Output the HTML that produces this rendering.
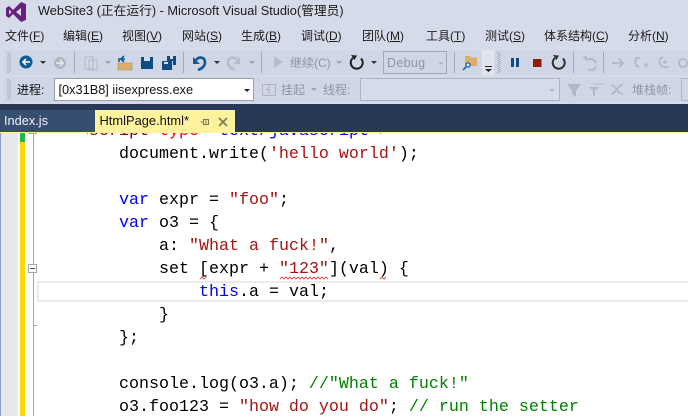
<!DOCTYPE html>
<html><head><meta charset="utf-8">
<style>
html,body{margin:0;padding:0}
body{width:688px;height:416px;overflow:hidden;position:relative;background:#d6dbe9;font-family:"Liberation Sans","Noto Sans CJK SC",sans-serif;font-size:12px;color:#111}
.a{position:absolute;white-space:pre}
.m{top:28px;line-height:16px;font-size:12px;color:#1b1b1b}
.m u{text-decoration:underline}
.g{color:#8f96a3}
.c{position:absolute;font-family:"Liberation Mono",monospace;font-size:16.67px;line-height:23px;white-space:pre;color:#000;height:23px}
.k{color:#0000ff}.s{color:#a31515}.t{color:#008000}.r{color:#ff0000}
svg{position:absolute;left:0;top:0}
</style></head><body>
<svg width="688" height="104" viewBox="0 0 688 104">
<!-- logo -->
<path d="M6 8 L9 6 L13 10 L21 2 L26 4 V20 L21 22 L13 14 L9 18 L6 16Z M9 9.500 V14.500 L11.500 12Z M16 12 L21 16 V8Z" fill="#68217a" fill-rule="evenodd"/>
<!-- toolbar bgs -->
<rect x="4" y="50" width="684" height="25" fill="#cfd6e5"/>
<rect x="4" y="77" width="684" height="25" fill="#cfd6e5"/>
<g stroke="#8a90a0" stroke-dasharray="1 1" fill="none"><path d="M8 52V73M10 53V73M8 79V100M10 80V100M498 52V73M500 53V73"/></g>
<rect x="482" y="50" width="12" height="25" fill="#dfe4ef"/>
<!-- nav -->
<circle cx="26" cy="62" r="6.500" fill="#0e5a96"/><path d="M30 62H23M26 59L23 62L26 65" stroke="#fff" stroke-width="1.600" fill="none"/>
<path d="M40 61h6l-3 3z" fill="#333"/>
<circle cx="60" cy="63" r="6" fill="#b4b8c2"/><path d="M56 63H63M60 60L63 63L60 66" stroke="#e8eaf0" stroke-width="1.500" fill="none"/>
<rect x="74" y="52" width="1" height="21" fill="#a3a9b8"/>
<path d="M85 57h8v12h-8z M89 60h8v10h-8z" fill="none" stroke="#b4b8c2"/><path d="M105 61h6l-3 3z" fill="#a0a4ae"/>
<path d="M118 63h14v7h-14z" fill="#dcae6b" stroke="#b58d50" stroke-width=".6"/><path d="M119 62v-3h6M124 56l-3 3 3 3" stroke="#0e5a96" stroke-width="1.600" fill="none"/>
<path d="M141 57h12v12h-12z" fill="#0e4c86"/><path d="M144 57h6v4h-6z" fill="#d6dbe9"/>
<path d="M162 61h10v9h-10z M167 56h9v9h-3v-4h-6z" fill="#0e4c86"/><path d="M170 56h3v3h-3z M164 62h4v2h-4z" fill="#d6dbe9"/>
<rect x="183" y="52" width="1" height="21" fill="#a3a9b8"/>
<path d="M196 60 C199 56 205 57 205 62.500 C205 66.500 201 69 198 70" stroke="#0e5a96" stroke-width="2.600" fill="none"/><path d="M193 57V64H200Z" fill="#0e5a96"/>
<path d="M214 61h6l-3 3z" fill="#333"/>
<path d="M237 60 C234 56 228 57 228 62.500 C228 66.500 232 69 235 70" stroke="#b9bdc7" stroke-width="2.600" fill="none"/><path d="M240 57V64H233Z" fill="#b9bdc7"/>
<path d="M249 61h6l-3 3z" fill="#a0a4ae"/>
<rect x="261" y="52" width="1" height="21" fill="#a3a9b8"/>
<path d="M274 56 L283 62 L274 68Z" fill="#b9bdc7"/>
<path d="M336 61h6l-3 3z" fill="#a0a4ae"/>
<path d="M361 58.500A6 6 0 1 1 353 58" fill="none" stroke="#222" stroke-width="2"/><path d="M351 55l6 .5-2.500 4.500z" fill="#222"/>
<path d="M371 61h6l-3 3z" fill="#333"/>
<rect x="383.500" y="51.500" width="63" height="22" fill="none" stroke="#a3a9b8"/>
<path d="M438 62h6l-3 3z" fill="#b4b8c2"/>
<rect x="454" y="52" width="1" height="21" fill="#a3a9b8"/>
<path d="M465 56h5l1 1.500h6v8.500h-12z" fill="#dcae6b"/><circle cx="468" cy="65" r="2.200" fill="#d6dbe9" stroke="#0e5a96" stroke-width="1.200"/><path d="M466 67l-3 3" stroke="#0e5a96" stroke-width="1.500"/>
<path d="M485 66h7v1h-7zM485 69h7l-3.500 3z" fill="#222"/>
<rect x="511" y="58" width="3" height="9" fill="#0e4c86"/><rect x="516" y="58" width="3" height="9" fill="#0e4c86"/>
<rect x="533" y="59" width="8.500" height="8" fill="#8f1d0c"/>
<path d="M563 58.500A6 6 0 1 1 555 58" fill="none" stroke="#333" stroke-width="2"/><path d="M553 55l6 .5-2.500 4.500z" fill="#333"/>
<rect x="573" y="52" width="1" height="21" fill="#a3a9b8"/>
<g fill="none" stroke="#b4b8c2" stroke-width="2"><path d="M587 60a6 6 0 0 1 9 3M596 66a5 5 0 0 1-8 3"/></g><path d="M582 57l5-1v5z" fill="#b4b8c2"/>
<rect x="603" y="52" width="1" height="21" fill="#a3a9b8"/>
<path d="M612 63h11M619 59l4 4-4 4" fill="none" stroke="#b4b8c2" stroke-width="1.800"/>
<path d="M639 58c-5 1-5 7 0 9M635 58h5" fill="none" stroke="#b4b8c2" stroke-width="1.800"/><circle cx="646" cy="65" r="1.800" fill="#b4b8c2"/>
<path d="M663 57c-5 2-5 8 1 10h5" fill="none" stroke="#b4b8c2" stroke-width="1.800"/><circle cx="665" cy="62" r="1.800" fill="#b4b8c2"/>
<circle cx="683" cy="63" r="4" fill="none" stroke="#b4b8c2" stroke-width="1.800"/>
<!-- toolbar 2 -->
<rect x="54.500" y="78.500" width="199" height="22" fill="#fff" stroke="#9ba0ad"/>
<path d="M244 89h6l-3 3z" fill="#222"/>
<rect x="262.500" y="84.500" width="13" height="11" fill="none" stroke="#b0b4be"/><path d="M270 86l-3 4h3l-2 4" stroke="#b0b4be" fill="none"/>
<path d="M311 88h6l-3 3z" fill="#a0a4ae"/>
<rect x="360.500" y="78.500" width="199" height="22" fill="#d6dbe9" stroke="#b0b4be"/>
<path d="M549 89h6l-3 3z" fill="#b4b8c2"/>
<path d="M567 84h14l-5 7v6l-4-3v-3z" fill="#b4b8c2"/>
<path d="M589 87h10l-4 4v5h-2v-5z" fill="#b4b8c2"/><path d="M593 84h10" stroke="#b4b8c2"/>
<path d="M611 85c5 0 6 9 12 9M611 94c5 0 6-9 12-9" fill="none" stroke="#b4b8c2" stroke-width="1.800"/>
<rect x="681.500" y="78.500" width="12" height="22" fill="none" stroke="#b0b4be"/>
</svg>

<div class="a" style="left:38px;top:3px;line-height:16px;font-size:12.750px;color:#1b1b1b">WebSite3 (正在运行) - Microsoft Visual Studio(管理员)</div>

<div class="a m" style="left:5px">文件(<u>F</u>)</div>
<div class="a m" style="left:63px">编辑(<u>E</u>)</div>
<div class="a m" style="left:122px">视图(<u>V</u>)</div>
<div class="a m" style="left:182px">网站(<u>S</u>)</div>
<div class="a m" style="left:241px">生成(<u>B</u>)</div>
<div class="a m" style="left:301px">调试(<u>D</u>)</div>
<div class="a m" style="left:362px">团队(<u>M</u>)</div>
<div class="a m" style="left:426px">工具(<u>T</u>)</div>
<div class="a m" style="left:485px">测试(<u>S</u>)</div>
<div class="a m" style="left:544px">体系结构(<u>C</u>)</div>
<div class="a m" style="left:628px">分析(<u>N</u>)</div>

<div class="a g" style="left:290px;top:55px;line-height:16px">继续(C)</div>
<div class="a g" style="left:387px;top:55px;line-height:16px;font-size:12.500px;letter-spacing:.3px">Debug</div>
<div class="a" style="left:17px;top:82px;line-height:16px">进程:</div>
<div class="a" style="left:58.500px;top:82px;line-height:16px;font-size:12.750px">[0x31B8] iisexpress.exe</div>
<div class="a g" style="left:281px;top:82px;line-height:16px">挂起</div>
<div class="a g" style="left:323px;top:82px;line-height:16px">线程:</div>
<div class="a g" style="left:632px;top:82px;line-height:16px">堆栈帧:</div>

<!-- tab strip -->
<div class="a" style="left:0;top:104px;width:688px;height:28px;background:#293955"></div>
<div class="a" style="left:0;top:110px;width:95px;height:22px;background:#364e6f"></div>
<div class="a" style="left:95px;top:110px;width:140px;height:22px;background:#fff29d"></div>
<div class="a" style="left:0;top:132px;width:688px;height:1px;background:#fff29d"></div>
<div class="a" style="left:4px;top:113px;line-height:16px;font-size:12.750px;color:#f0f2f5">Index.js</div>
<div class="a" style="left:99.500px;top:113px;line-height:16px;font-size:12.900px;color:#111">HtmlPage.html*</div>
<svg width="688" height="133" style="pointer-events:none">
<path d="M200.500 122h3M203.500 119.500v5h5v-5zM206 119.500v5" stroke="#7a7656" fill="none"/>
<path d="M219 118l8 8M227 118l-8 8" stroke="#7a7656" stroke-width="1.600"/>
</svg>

<!-- editor -->
<div class="a" id="e" style="left:0;top:133px;width:688px;height:283px;background:#fff;overflow:hidden">
<div class="a" style="left:0;top:0;width:1px;height:283px;background:#8c9bc9"></div>
<div class="a" style="left:1px;top:0;width:17px;height:283px;background:#e6e7e8"></div>
<div class="a" style="left:20px;top:0;width:5px;height:283px;background:#ffd800"></div>
<div class="a" style="left:20px;top:0;width:5px;height:9px;background:#1fb84a"></div>
<div class="a" style="left:33px;top:0;width:1px;height:283px;background:#a5a5a5"></div>
<div class="a" style="left:28px;top:0;width:9px;height:1px;background:#a5a5a5"></div>
<div class="a" style="left:28px;top:131px;background:#fff;border:1px solid #a5a5a5;width:7px;height:7px"></div>
<div class="a" style="left:30px;top:135px;width:5px;height:1px;background:#444"></div>
<div class="a" style="left:33px;top:192px;width:4px;height:1px;background:#a5a5a5"></div>
<div class="a" style="left:37px;top:148px;width:651px;height:17px;border:2px solid #eaeaf2;border-right:0"></div>

<div class="c" style="left:79px;top:-13px"><span class="k">&lt;</span><span style="color:#800000">script</span> <span class="r">type</span><span class="k">=</span><span class="k">"text/javascript"&gt;</span></div>
<div class="c" style="left:119px;top:10px">document.write(<span class="s">'hello world'</span>);</div>
<div class="c" style="left:119px;top:56px"><span class="k">var</span> expr = <span class="s">"foo"</span>;</div>
<div class="c" style="left:119px;top:79px"><span class="k">var</span> o3 = {</div>
<div class="c" style="left:159px;top:102px">a: <span class="s">"What a fuck!"</span>,</div>
<div class="c" style="left:159px;top:125px">set [expr + <span class="s">"123"</span>](val) {</div>
<div class="c" style="left:199px;top:148px"><span class="k">this</span>.a = val;</div>
<div class="c" style="left:159px;top:171px">}</div>
<div class="c" style="left:119px;top:194px">};</div>
<div class="c" style="left:119px;top:240px">console.log(o3.a); <span class="t">//"What a fuck!"</span></div>
<div class="c" style="left:119px;top:263px">o3.foo123 = <span class="s">"how do you do"</span>; <span class="t">// run the setter</span></div>
<svg width="688" height="283" style="left:0;top:0">
<path d="M200 146l2-2 2 2 2-2M280 146l2-2 2 2 2-2 2 2 2-2 2 2 2-2 2 2 2-2 2 2 2-2 2 2 2-2 2 2 2-2 2 2 2-2 2 2 2-2 2 2 2-2 2 2 2-2 2 2M380 146l2-2 2 2 2-2" fill="none" stroke="#e05050"/>
</svg>
</div>
</body></html>
